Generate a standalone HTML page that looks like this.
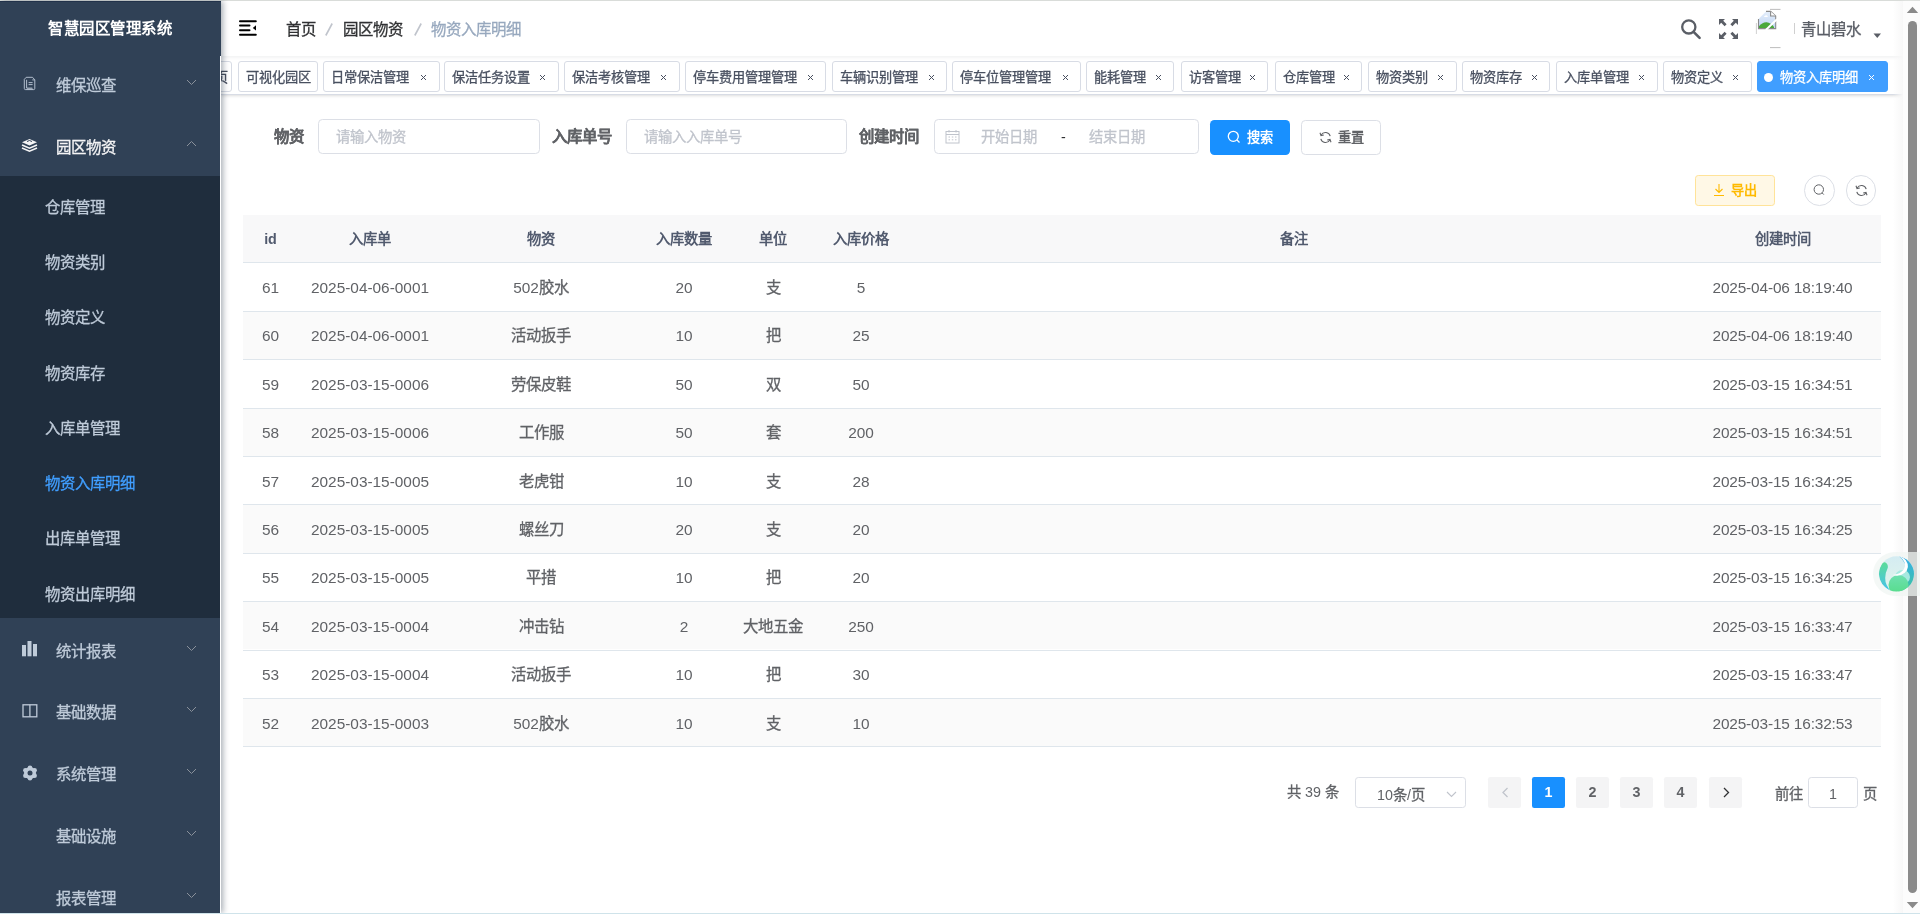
<!DOCTYPE html>
<html lang="zh-CN"><head><meta charset="utf-8"><title>物资入库明细</title>
<style>
*{box-sizing:border-box;margin:0;padding:0}
html,body{width:1920px;height:914px;overflow:hidden;background:#fff;font-family:"Liberation Sans",sans-serif;}
.t{position:absolute;white-space:nowrap;will-change:transform}
.c{-webkit-text-stroke:0.3px currentColor}
.b .c{-webkit-text-stroke:0}
.bs .c{-webkit-text-stroke:0.1px currentColor}
.abs{position:absolute}
</style></head><body>

<div class="abs" style="left:0;top:0;width:1920px;height:1px;background:#dde0dd"></div>
<div class="abs" style="left:0;top:1px;width:221px;height:912px;background:#304156;box-shadow:2px 0 6px rgba(0,21,41,.35);z-index:5"></div>
<div class="abs" style="left:0;top:1px;width:221px;height:1px;background:#22324a;z-index:6"></div>
<div class="abs" style="left:0;top:176px;width:220px;height:442px;background:#1f2d3d;z-index:6"></div>
<div class="abs" style="left:220px;top:56px;width:1px;height:857px;background:#fff;z-index:6"></div>
<div id="side" class="abs" style="left:0;top:0;width:220px;height:914px;z-index:7">
<div class="t b" style="left:0px;top:15.90px;height:25px;line-height:25px;font-size:15.4px;color:#fff;font-weight:bold;width:220px;text-align:center;letter-spacing:0.45px;text-indent:0.45px"><span class="c">智慧园区管理系统</span></div>
<div class="t" style="left:55.5px;top:72.75px;height:25px;line-height:25px;font-size:15.4px;color:#bfcbd9;"><span class="c">维保巡查</span></div>
<div class="t" style="left:55.5px;top:134.85px;height:25px;line-height:25px;font-size:15.4px;color:#f4f4f5;"><span class="c">园区物资</span></div>
<div class="t" style="left:44.5px;top:194.95px;height:25px;line-height:25px;font-size:15.4px;color:#bfcbd9;"><span class="c">仓库管理</span></div>
<div class="t" style="left:44.5px;top:250.20px;height:25px;line-height:25px;font-size:15.4px;color:#bfcbd9;"><span class="c">物资类别</span></div>
<div class="t" style="left:44.5px;top:305.45px;height:25px;line-height:25px;font-size:15.4px;color:#bfcbd9;"><span class="c">物资定义</span></div>
<div class="t" style="left:44.5px;top:360.70px;height:25px;line-height:25px;font-size:15.4px;color:#bfcbd9;"><span class="c">物资库存</span></div>
<div class="t" style="left:44.5px;top:415.95px;height:25px;line-height:25px;font-size:15.4px;color:#bfcbd9;"><span class="c">入库单管理</span></div>
<div class="t" style="left:44.5px;top:471.20px;height:25px;line-height:25px;font-size:15.4px;color:#409eff;"><span class="c">物资入库明细</span></div>
<div class="t" style="left:44.5px;top:526.45px;height:25px;line-height:25px;font-size:15.4px;color:#bfcbd9;"><span class="c">出库单管理</span></div>
<div class="t" style="left:44.5px;top:581.70px;height:25px;line-height:25px;font-size:15.4px;color:#bfcbd9;"><span class="c">物资出库明细</span></div>
<div class="t" style="left:55.5px;top:638.50px;height:25px;line-height:25px;font-size:15.4px;color:#bfcbd9;"><span class="c">统计报表</span></div>
<div class="t" style="left:55.5px;top:700.20px;height:25px;line-height:25px;font-size:15.4px;color:#bfcbd9;"><span class="c">基础数据</span></div>
<div class="t" style="left:55.5px;top:762.00px;height:25px;line-height:25px;font-size:15.4px;color:#bfcbd9;"><span class="c">系统管理</span></div>
<div class="t" style="left:55.5px;top:823.70px;height:25px;line-height:25px;font-size:15.4px;color:#bfcbd9;"><span class="c">基础设施</span></div>
<div class="t" style="left:55.5px;top:886.20px;height:25px;line-height:25px;font-size:15.4px;color:#bfcbd9;"><span class="c">报表管理</span></div>
<svg class="abs" style="left:186px;top:79.10px" width="11" height="7" viewBox="0 0 11 7"><path d="M1 1 L5.5 5.5 L10 1" fill="none" stroke="#8a919b" stroke-width="1.0"/></svg>
<svg class="abs" style="left:186px;top:140.00px" width="11" height="7" viewBox="0 0 11 7"><path d="M1 6 L5.5 1.5 L10 6" fill="none" stroke="#8a919b" stroke-width="1.0"/></svg>
<svg class="abs" style="left:186px;top:644.50px" width="11" height="7" viewBox="0 0 11 7"><path d="M1 1 L5.5 5.5 L10 1" fill="none" stroke="#8a919b" stroke-width="1.0"/></svg>
<svg class="abs" style="left:186px;top:706.20px" width="11" height="7" viewBox="0 0 11 7"><path d="M1 1 L5.5 5.5 L10 1" fill="none" stroke="#8a919b" stroke-width="1.0"/></svg>
<svg class="abs" style="left:186px;top:768.00px" width="11" height="7" viewBox="0 0 11 7"><path d="M1 1 L5.5 5.5 L10 1" fill="none" stroke="#8a919b" stroke-width="1.0"/></svg>
<svg class="abs" style="left:186px;top:829.70px" width="11" height="7" viewBox="0 0 11 7"><path d="M1 1 L5.5 5.5 L10 1" fill="none" stroke="#8a919b" stroke-width="1.0"/></svg>
<svg class="abs" style="left:186px;top:891.70px" width="11" height="7" viewBox="0 0 11 7"><path d="M1 1 L5.5 5.5 L10 1" fill="none" stroke="#8a919b" stroke-width="1.0"/></svg>
<svg class="abs" style="left:18px;top:72px" width="24" height="24" viewBox="0 0 24 24">
<path d="M8.2 5.3 H14.5 L16.8 7.8 V16.4 Q16.8 17.6 15.6 17.6 H7.5 Q6.3 17.6 6.3 16.4 V7.4 Z" fill="none" stroke="#bfcbd9" stroke-width="0.9"/>
<path d="M8.6 7.8 V16" stroke="#bfcbd9" stroke-width="0.9"/>
<path d="M10.6 10.6 H14.6 M10.6 12.6 H14.6" stroke="#bfcbd9" stroke-width="0.9"/>
<path d="M8.6 15.4 H14.2 L15 17.6 H8.6Z" fill="#bfcbd9" opacity="0.7"/>
<path d="M14.3 7.9 H16.6" stroke="#bfcbd9" stroke-width="0.9"/></svg>
<svg class="abs" style="left:21px;top:138px" width="17" height="15" viewBox="0 0 17 15">
<path d="M8.5 1 L16 4.2 L8.5 7.4 L1 4.2Z" fill="#f4f4f5"/>
<path d="M1 7 L8.5 10.2 L16 7" fill="none" stroke="#f4f4f5" stroke-width="1.6"/>
<path d="M1 10 L8.5 13.2 L16 10" fill="none" stroke="#f4f4f5" stroke-width="1.6"/>
<path d="M6 3.5 L8.5 2.5 L11 3.5" fill="none" stroke="#304156" stroke-width="1"/></svg>
<svg class="abs" style="left:22px;top:641px" width="16" height="16" viewBox="0 0 16 16">
<rect x="0" y="4" width="4" height="11.3" fill="#bfcbd9"/><rect x="5.5" y="0" width="4" height="15.3" fill="#bfcbd9"/><rect x="11" y="3" width="4" height="12.3" fill="#bfcbd9"/></svg>
<svg class="abs" style="left:22px;top:704px" width="16" height="14" viewBox="0 0 16 14">
<rect x="1" y="0.8" width="13.8" height="12" fill="none" stroke="#bfcbd9" stroke-width="1.3"/><path d="M7.9 0.8 V12.8" stroke="#bfcbd9" stroke-width="1.3"/></svg>
<svg class="abs" style="left:22px;top:765px" width="16" height="16" viewBox="0 0 16 16">
<defs><mask id="gm"><rect width="16" height="16" fill="#fff"/><circle cx="8" cy="8" r="2.5" fill="#000"/></mask></defs>
<g fill="#bfcbd9" mask="url(#gm)"><circle cx="8" cy="8" r="6"/><circle cx="12.59" cy="10.65" r="2.3"/><circle cx="8.00" cy="13.30" r="2.3"/><circle cx="3.41" cy="10.65" r="2.3"/><circle cx="3.41" cy="5.35" r="2.3"/><circle cx="8.00" cy="2.70" r="2.3"/><circle cx="12.59" cy="5.35" r="2.3"/></g></svg>
</div>
<div class="abs" style="left:221px;top:1px;width:1682px;height:55px;background:#fff;box-shadow:0 1px 4px rgba(0,21,41,.08);z-index:2"></div>
<svg class="abs" style="left:239px;top:20px;z-index:3" width="18" height="16" viewBox="0 0 18 16">
<rect x="0" y="0.2" width="17.8" height="2" rx="1" fill="#000"/>
<rect x="0" y="4.6" width="11.5" height="2" rx="1" fill="#000"/>
<rect x="0" y="9.2" width="11.5" height="2" rx="1" fill="#000"/>
<rect x="0" y="13.8" width="17.8" height="2" rx="1" fill="#000"/>
<path d="M13.8 7.9 L17 5.2 V10.6Z" fill="#000"/></svg>
<div class="abs" style="left:0;top:0;z-index:3">
<div class="t" style="left:285.5px;top:16.70px;height:25px;line-height:25px;font-size:15.4px;color:#303133;"><span class="c">首页</span></div>
<svg class="abs" style="left:324px;top:22px" width="10" height="15" viewBox="0 0 10 15"><path d="M1.8 13.5 L8.2 1.5" stroke="#c0c4cc" stroke-width="1.6"/></svg>
<div class="t" style="left:343px;top:16.70px;height:25px;line-height:25px;font-size:15.4px;color:#303133;"><span class="c">园区物资</span></div>
<svg class="abs" style="left:413px;top:22px" width="10" height="15" viewBox="0 0 10 15"><path d="M1.8 13.5 L8.2 1.5" stroke="#c0c4cc" stroke-width="1.6"/></svg>
<div class="t" style="left:430.5px;top:16.70px;height:25px;line-height:25px;font-size:15.4px;color:#97a8be;"><span class="c">物资入库明细</span></div>
<svg class="abs" style="left:1680px;top:18px" width="22" height="22" viewBox="0 0 22 22">
<circle cx="8.8" cy="8.9" r="6.6" fill="none" stroke="#5a5e66" stroke-width="2.3"/>
<path d="M13.6 13.8 L19.6 19.8" stroke="#5a5e66" stroke-width="2.6" stroke-linecap="round"/></svg>
<svg class="abs" style="left:1719px;top:19px" width="20" height="21" viewBox="0 0 20 21" fill="#5a5e66">
<path d="M0 0 H6 L4.2 1.8 L7.6 5.2 L5.6 7.2 L2.2 3.8 L0 6Z"/>
<path d="M19 0 H13 L14.8 1.8 L11.4 5.2 L13.4 7.2 L16.8 3.8 L19 6Z"/>
<path d="M0 20 H6 L4.2 18.2 L7.6 14.8 L5.6 12.8 L2.2 16.2 L0 14Z"/>
<path d="M19 20 H13 L14.8 18.2 L11.4 14.8 L13.4 12.8 L16.8 16.2 L19 14Z"/></svg>
<svg class="abs" style="left:1754px;top:8px" width="30" height="42" viewBox="0 0 30 42">
<defs><linearGradient id="sky" x1="0" y1="0" x2="0" y2="1"><stop offset="0" stop-color="#e4eefb"/><stop offset="1" stop-color="#bfd4f3"/></linearGradient></defs>
<path d="M16 1.4 H26.5" stroke="#b5b5b5" stroke-width="0.9"/>
<path d="M16 39.6 H26.5" stroke="#b5b5b5" stroke-width="0.9"/>
<path d="M2.4 15 V26" stroke="#c5c5c5" stroke-width="0.8"/>
<path d="M4.5 10.9 L12 3.4 H16.6 L21.7 8 V20.6 H4.5Z" fill="url(#sky)"/>
<path d="M10 8.8 Q11 6.8 13 7.4 Q14.2 8.2 13.6 9 H10Z" fill="#fff"/>
<path d="M4.5 20.6 V18.8 Q8.2 14 12.6 14.2 Q17 14.6 20 19 V20.6Z" fill="#4aa83a"/>
<path d="M4.5 10.9 V20.6 H21.7 V8 L16.6 3.4 H12" fill="none" stroke="#8a8a8a" stroke-width="1.1"/>
<path d="M16.6 3.4 V8 H21.7" fill="#fff" stroke="#8a8a8a" stroke-width="1.1"/>
<path d="M23 11.2 L11.8 22" stroke="#fff" stroke-width="1.9"/></svg>
<div class="abs" style="left:1794px;top:23px;width:1px;height:11px;background:#d0d0d0"></div>
<div class="t" style="left:1800.5px;top:16.70px;height:25px;line-height:25px;font-size:15.4px;color:#5a5e66;"><span class="c">青山碧水</span></div>
<svg class="abs" style="left:1873px;top:33px" width="9" height="6" viewBox="0 0 9 6"><path d="M0.5 0.5 H8 L4.25 5Z" fill="#5a5e66"/></svg>
</div>
<div class="abs" style="left:221px;top:56px;width:1682px;height:38.5px;background:#fff;border-bottom:1px solid #d8dce5;box-shadow:0 1px 3px 0 rgba(0,0,0,.12),0 0 3px 0 rgba(0,0,0,.04);z-index:1"></div>
<div class="abs" style="left:221px;top:56px;width:1682px;height:40px;overflow:hidden;z-index:2">
<div class="abs" style="left:-61px;top:5px;width:72px;height:31px;background:#fff;border:1px solid #d8dce5;color:#495060;border-radius:3px;"></div>
<div class="t" style="left:-6px;top:11.00px;height:21px;line-height:21px;font-size:13.2px;color:#495060;"><span class="c">页</span></div>
<div class="abs" style="left:17px;top:5px;width:80px;height:31px;background:#fff;border:1px solid #d8dce5;color:#495060;border-radius:3px;"></div>
<div class="t" style="left:25px;top:11.00px;height:21px;line-height:21px;font-size:13.2px;color:#495060;"><span class="c">可视化园区</span></div>
<div class="abs" style="left:102px;top:5px;width:117px;height:31px;background:#fff;border:1px solid #d8dce5;color:#495060;border-radius:3px;"></div>
<div class="t" style="left:110px;top:11.00px;height:21px;line-height:21px;font-size:13.2px;color:#495060;"><span class="c">日常保洁管理</span></div>
<svg class="abs" style="left:199.1px;top:17.5px" width="7" height="7" viewBox="0 0 7 7"><path d="M1 1 L6 6 M6 1 L1 6" stroke="#495060" stroke-width="1"/></svg>
<div class="abs" style="left:223px;top:5px;width:115px;height:31px;background:#fff;border:1px solid #d8dce5;color:#495060;border-radius:3px;"></div>
<div class="t" style="left:231px;top:11.00px;height:21px;line-height:21px;font-size:13.2px;color:#495060;"><span class="c">保洁任务设置</span></div>
<svg class="abs" style="left:318.1px;top:17.5px" width="7" height="7" viewBox="0 0 7 7"><path d="M1 1 L6 6 M6 1 L1 6" stroke="#495060" stroke-width="1"/></svg>
<div class="abs" style="left:343px;top:5px;width:116px;height:31px;background:#fff;border:1px solid #d8dce5;color:#495060;border-radius:3px;"></div>
<div class="t" style="left:351px;top:11.00px;height:21px;line-height:21px;font-size:13.2px;color:#495060;"><span class="c">保洁考核管理</span></div>
<svg class="abs" style="left:439.1px;top:17.5px" width="7" height="7" viewBox="0 0 7 7"><path d="M1 1 L6 6 M6 1 L1 6" stroke="#495060" stroke-width="1"/></svg>
<div class="abs" style="left:464px;top:5px;width:141px;height:31px;background:#fff;border:1px solid #d8dce5;color:#495060;border-radius:3px;"></div>
<div class="t" style="left:472px;top:11.00px;height:21px;line-height:21px;font-size:13.2px;color:#495060;"><span class="c">停车费用管理管理</span></div>
<svg class="abs" style="left:586.0px;top:17.5px" width="7" height="7" viewBox="0 0 7 7"><path d="M1 1 L6 6 M6 1 L1 6" stroke="#495060" stroke-width="1"/></svg>
<div class="abs" style="left:611px;top:5px;width:115px;height:31px;background:#fff;border:1px solid #d8dce5;color:#495060;border-radius:3px;"></div>
<div class="t" style="left:619px;top:11.00px;height:21px;line-height:21px;font-size:13.2px;color:#495060;"><span class="c">车辆识别管理</span></div>
<svg class="abs" style="left:706.8px;top:17.5px" width="7" height="7" viewBox="0 0 7 7"><path d="M1 1 L6 6 M6 1 L1 6" stroke="#495060" stroke-width="1"/></svg>
<div class="abs" style="left:731px;top:5px;width:129px;height:31px;background:#fff;border:1px solid #d8dce5;color:#495060;border-radius:3px;"></div>
<div class="t" style="left:739px;top:11.00px;height:21px;line-height:21px;font-size:13.2px;color:#495060;"><span class="c">停车位管理管理</span></div>
<svg class="abs" style="left:840.8px;top:17.5px" width="7" height="7" viewBox="0 0 7 7"><path d="M1 1 L6 6 M6 1 L1 6" stroke="#495060" stroke-width="1"/></svg>
<div class="abs" style="left:865px;top:5px;width:88px;height:31px;background:#fff;border:1px solid #d8dce5;color:#495060;border-radius:3px;"></div>
<div class="t" style="left:873px;top:11.00px;height:21px;line-height:21px;font-size:13.2px;color:#495060;"><span class="c">能耗管理</span></div>
<svg class="abs" style="left:933.8px;top:17.5px" width="7" height="7" viewBox="0 0 7 7"><path d="M1 1 L6 6 M6 1 L1 6" stroke="#495060" stroke-width="1"/></svg>
<div class="abs" style="left:960px;top:5px;width:87px;height:31px;background:#fff;border:1px solid #d8dce5;color:#495060;border-radius:3px;"></div>
<div class="t" style="left:968px;top:11.00px;height:21px;line-height:21px;font-size:13.2px;color:#495060;"><span class="c">访客管理</span></div>
<svg class="abs" style="left:1027.8px;top:17.5px" width="7" height="7" viewBox="0 0 7 7"><path d="M1 1 L6 6 M6 1 L1 6" stroke="#495060" stroke-width="1"/></svg>
<div class="abs" style="left:1054px;top:5px;width:87px;height:31px;background:#fff;border:1px solid #d8dce5;color:#495060;border-radius:3px;"></div>
<div class="t" style="left:1062px;top:11.00px;height:21px;line-height:21px;font-size:13.2px;color:#495060;"><span class="c">仓库管理</span></div>
<svg class="abs" style="left:1121.7px;top:17.5px" width="7" height="7" viewBox="0 0 7 7"><path d="M1 1 L6 6 M6 1 L1 6" stroke="#495060" stroke-width="1"/></svg>
<div class="abs" style="left:1147px;top:5px;width:89px;height:31px;background:#fff;border:1px solid #d8dce5;color:#495060;border-radius:3px;"></div>
<div class="t" style="left:1155px;top:11.00px;height:21px;line-height:21px;font-size:13.2px;color:#495060;"><span class="c">物资类别</span></div>
<svg class="abs" style="left:1216.2px;top:17.5px" width="7" height="7" viewBox="0 0 7 7"><path d="M1 1 L6 6 M6 1 L1 6" stroke="#495060" stroke-width="1"/></svg>
<div class="abs" style="left:1241px;top:5px;width:88px;height:31px;background:#fff;border:1px solid #d8dce5;color:#495060;border-radius:3px;"></div>
<div class="t" style="left:1249px;top:11.00px;height:21px;line-height:21px;font-size:13.2px;color:#495060;"><span class="c">物资库存</span></div>
<svg class="abs" style="left:1309.9px;top:17.5px" width="7" height="7" viewBox="0 0 7 7"><path d="M1 1 L6 6 M6 1 L1 6" stroke="#495060" stroke-width="1"/></svg>
<div class="abs" style="left:1335px;top:5px;width:102px;height:31px;background:#fff;border:1px solid #d8dce5;color:#495060;border-radius:3px;"></div>
<div class="t" style="left:1343px;top:11.00px;height:21px;line-height:21px;font-size:13.2px;color:#495060;"><span class="c">入库单管理</span></div>
<svg class="abs" style="left:1417.0px;top:17.5px" width="7" height="7" viewBox="0 0 7 7"><path d="M1 1 L6 6 M6 1 L1 6" stroke="#495060" stroke-width="1"/></svg>
<div class="abs" style="left:1442px;top:5px;width:89px;height:31px;background:#fff;border:1px solid #d8dce5;color:#495060;border-radius:3px;"></div>
<div class="t" style="left:1450px;top:11.00px;height:21px;line-height:21px;font-size:13.2px;color:#495060;"><span class="c">物资定义</span></div>
<svg class="abs" style="left:1511.0px;top:17.5px" width="7" height="7" viewBox="0 0 7 7"><path d="M1 1 L6 6 M6 1 L1 6" stroke="#495060" stroke-width="1"/></svg>
<div class="abs" style="left:1536px;top:5px;width:131px;height:31px;background:#409eff;border:1px solid #409eff;color:#fff;border-radius:3px;"></div>
<div class="abs" style="left:1543px;top:17px;width:9px;height:9px;border-radius:50%;background:#fff"></div>
<div class="t" style="left:1559px;top:11.00px;height:21px;line-height:21px;font-size:13.2px;color:#fff;"><span class="c">物资入库明细</span></div>
<svg class="abs" style="left:1647.4px;top:17.5px" width="7" height="7" viewBox="0 0 7 7"><path d="M1 1 L6 6 M6 1 L1 6" stroke="#fff" stroke-width="1"/></svg>
</div>
<div class="abs" style="left:0;top:0;z-index:1">
<div class="t b bs" style="left:274.4px;top:123.90px;height:25px;line-height:25px;font-size:15.4px;color:#606266;font-weight:bold;"><span class="c">物资</span></div>
<div class="t b bs" style="left:551.5px;top:123.90px;height:25px;line-height:25px;font-size:15.4px;color:#606266;font-weight:bold;"><span class="c">入库单号</span></div>
<div class="t b bs" style="left:859.2px;top:123.90px;height:25px;line-height:25px;font-size:15.4px;color:#606266;font-weight:bold;"><span class="c">创建时间</span></div>
<div class="abs" style="left:318px;top:119px;width:222px;height:34.6px;border:1px solid #dcdfe6;border-radius:4.4px;background:#fff"></div>
<div class="t" style="left:336px;top:125.80px;height:23px;line-height:23px;font-size:14.3px;color:#c0c4cc;"><span class="c">请输入物资</span></div>
<div class="abs" style="left:626px;top:119px;width:221px;height:34.6px;border:1px solid #dcdfe6;border-radius:4.4px;background:#fff"></div>
<div class="t" style="left:644px;top:125.80px;height:23px;line-height:23px;font-size:14.3px;color:#c0c4cc;"><span class="c">请输入入库单号</span></div>
<div class="abs" style="left:934px;top:119px;width:265px;height:34.6px;border:1px solid #dcdfe6;border-radius:4.4px;background:#fff"></div>
<div class="t" style="left:980.5px;top:125.90px;height:23px;line-height:23px;font-size:14.3px;color:#c0c4cc;"><span class="c">开始日期</span></div>
<div class="t" style="left:1060.5px;top:125.50px;height:23px;line-height:23px;font-size:14.3px;color:#303133;">-</div>
<div class="t" style="left:1088.5px;top:125.90px;height:23px;line-height:23px;font-size:14.3px;color:#c0c4cc;"><span class="c">结束日期</span></div>
<svg class="abs" style="left:945px;top:129px" width="15" height="15" viewBox="0 0 15 15">
<rect x="1" y="2.5" width="13" height="11.5" fill="none" stroke="#c0c4cc" stroke-width="1"/>
<path d="M1 5.5 H14" stroke="#c0c4cc" stroke-width="1"/>
<path d="M4 1 V3.5 M11 1 V3.5" stroke="#c0c4cc" stroke-width="1"/>
<path d="M3.5 8 H5 M6.8 8 H8.3 M10 8 H11.5 M3.5 10.8 H5 M6.8 10.8 H8.3 M10 10.8 H11.5" stroke="#c0c4cc" stroke-width="1"/></svg>
<div class="abs" style="left:1210px;top:120px;width:80px;height:34.6px;background:#1890ff;border-radius:4.4px"></div>
<svg class="abs" style="left:1227px;top:130px" width="14" height="14" viewBox="0 0 14 14">
<circle cx="6.3" cy="6.3" r="5" fill="none" stroke="#fff" stroke-width="1.3"/><path d="M10 10 L12.5 12.5" stroke="#fff" stroke-width="1.3"/></svg>
<div class="t b" style="left:1246.5px;top:126.80px;height:21px;line-height:21px;font-size:13.2px;color:#fff;font-weight:bold;"><span class="c">搜索</span></div>
<div class="abs" style="left:1301px;top:120px;width:80px;height:34.6px;background:#fff;border:1px solid #dcdfe6;border-radius:4.4px"></div>
<svg class="abs" style="left:1319px;top:131px" width="13" height="13" viewBox="0 0 13 13">
<path d="M11.2 5.2 A4.9 4.9 0 0 0 2.2 4" fill="none" stroke="#606266" stroke-width="1.1"/>
<path d="M1.8 7.8 A4.9 4.9 0 0 0 10.8 9" fill="none" stroke="#606266" stroke-width="1.1"/>
<path d="M1 1.8 L2 4.6 L4.8 4" fill="none" stroke="#606266" stroke-width="1.1"/>
<path d="M12 11.2 L11 8.4 L8.2 9" fill="none" stroke="#606266" stroke-width="1.1"/></svg>
<div class="t b" style="left:1338px;top:126.80px;height:21px;line-height:21px;font-size:13.2px;color:#606266;font-weight:bold;"><span class="c">重置</span></div>
<div class="abs" style="left:1695px;top:175px;width:80px;height:30.8px;background:#fff8e6;border:1px solid #ffe399;border-radius:3.3px"></div>
<svg class="abs" style="left:1713px;top:183px" width="12" height="14" viewBox="0 0 12 14">
<path d="M6 1 V9.5 M2.5 6 L6 9.5 L9.5 6 M1 12.5 H11" fill="none" stroke="#ffba00" stroke-width="1.1"/></svg>
<div class="t b" style="left:1731px;top:180.30px;height:21px;line-height:21px;font-size:13.2px;color:#ffba00;font-weight:bold;"><span class="c">导出</span></div>
<div class="abs" style="left:1804.1px;top:175px;width:30.8px;height:30.8px;border:1px solid #dcdfe6;border-radius:50%;background:#fff"></div>
<svg class="abs" style="left:1813.0px;top:184px" width="13" height="13" viewBox="0 0 13 13">
<circle cx="5.8" cy="5.5" r="4.7" fill="none" stroke="#606266" stroke-width="1.0"/><path d="M9.1 8.9 L10.8 10.6" stroke="#606266" stroke-width="1.0"/></svg>
<div class="abs" style="left:1845.6px;top:175px;width:30.8px;height:30.8px;border:1px solid #dcdfe6;border-radius:50%;background:#fff"></div>
<svg class="abs" style="left:1854.5px;top:184px" width="13" height="13" viewBox="0 0 13 13">
<path d="M11.2 5.2 A4.9 4.9 0 0 0 2.2 4" fill="none" stroke="#606266" stroke-width="1.1"/>
<path d="M1.8 7.8 A4.9 4.9 0 0 0 10.8 9" fill="none" stroke="#606266" stroke-width="1.1"/>
<path d="M1 1.8 L2 4.6 L4.8 4" fill="none" stroke="#606266" stroke-width="1.1"/>
<path d="M12 11.2 L11 8.4 L8.2 9" fill="none" stroke="#606266" stroke-width="1.1"/></svg>
<div class="abs" style="left:243px;top:215px;width:1638px;height:47.3px;background:#f8f8f9"></div>
<div class="abs" style="left:243px;top:262.3px;width:1638px;height:1.1px;background:#dfe6ec"></div>
<div class="t b" style="left:243px;top:228.30px;height:23px;line-height:23px;font-size:14.3px;color:#515a6e;font-weight:bold;width:55px;text-align:center;">id</div>
<div class="t b" style="left:298px;top:228.30px;height:23px;line-height:23px;font-size:14.3px;color:#515a6e;font-weight:bold;width:144px;text-align:center;"><span class="c">入库单</span></div>
<div class="t b" style="left:442px;top:228.30px;height:23px;line-height:23px;font-size:14.3px;color:#515a6e;font-weight:bold;width:198px;text-align:center;"><span class="c">物资</span></div>
<div class="t b" style="left:640px;top:228.30px;height:23px;line-height:23px;font-size:14.3px;color:#515a6e;font-weight:bold;width:88px;text-align:center;"><span class="c">入库数量</span></div>
<div class="t b" style="left:728px;top:228.30px;height:23px;line-height:23px;font-size:14.3px;color:#515a6e;font-weight:bold;width:90px;text-align:center;"><span class="c">单位</span></div>
<div class="t b" style="left:818px;top:228.30px;height:23px;line-height:23px;font-size:14.3px;color:#515a6e;font-weight:bold;width:86px;text-align:center;"><span class="c">入库价格</span></div>
<div class="t b" style="left:904px;top:228.30px;height:23px;line-height:23px;font-size:14.3px;color:#515a6e;font-weight:bold;width:780px;text-align:center;"><span class="c">备注</span></div>
<div class="t b" style="left:1684px;top:228.30px;height:23px;line-height:23px;font-size:14.3px;color:#515a6e;font-weight:bold;width:197px;text-align:center;"><span class="c">创建时间</span></div>
<div class="abs" style="left:243px;top:310.70px;width:1638px;height:1.1px;background:#dfe6ec"></div>
<div class="t" style="left:243px;top:275.00px;height:25px;line-height:25px;font-size:15.4px;color:#606266;width:55px;text-align:center;">61</div>
<div class="t" style="left:298px;top:275.00px;height:25px;line-height:25px;font-size:15.4px;color:#606266;width:144px;text-align:center;">2025-04-06-0001</div>
<div class="t" style="left:442px;top:275.00px;height:25px;line-height:25px;font-size:15.4px;color:#606266;width:198px;text-align:center;">502<span class="c">胶水</span></div>
<div class="t" style="left:640px;top:275.00px;height:25px;line-height:25px;font-size:15.4px;color:#606266;width:88px;text-align:center;">20</div>
<div class="t" style="left:728px;top:275.00px;height:25px;line-height:25px;font-size:15.4px;color:#606266;width:90px;text-align:center;"><span class="c">支</span></div>
<div class="t" style="left:818px;top:275.00px;height:25px;line-height:25px;font-size:15.4px;color:#606266;width:86px;text-align:center;">5</div>
<div class="t" style="left:1684px;top:275.00px;height:25px;line-height:25px;font-size:15.4px;color:#606266;width:197px;text-align:center;letter-spacing:-0.15px;">2025-04-06 18:19:40</div>
<div class="abs" style="left:243px;top:311.80px;width:1638px;height:47.3px;background:#fafafa"></div>
<div class="abs" style="left:243px;top:359.10px;width:1638px;height:1.1px;background:#dfe6ec"></div>
<div class="t" style="left:243px;top:323.40px;height:25px;line-height:25px;font-size:15.4px;color:#606266;width:55px;text-align:center;">60</div>
<div class="t" style="left:298px;top:323.40px;height:25px;line-height:25px;font-size:15.4px;color:#606266;width:144px;text-align:center;">2025-04-06-0001</div>
<div class="t" style="left:442px;top:323.40px;height:25px;line-height:25px;font-size:15.4px;color:#606266;width:198px;text-align:center;"><span class="c">活动扳手</span></div>
<div class="t" style="left:640px;top:323.40px;height:25px;line-height:25px;font-size:15.4px;color:#606266;width:88px;text-align:center;">10</div>
<div class="t" style="left:728px;top:323.40px;height:25px;line-height:25px;font-size:15.4px;color:#606266;width:90px;text-align:center;"><span class="c">把</span></div>
<div class="t" style="left:818px;top:323.40px;height:25px;line-height:25px;font-size:15.4px;color:#606266;width:86px;text-align:center;">25</div>
<div class="t" style="left:1684px;top:323.40px;height:25px;line-height:25px;font-size:15.4px;color:#606266;width:197px;text-align:center;letter-spacing:-0.15px;">2025-04-06 18:19:40</div>
<div class="abs" style="left:243px;top:407.50px;width:1638px;height:1.1px;background:#dfe6ec"></div>
<div class="t" style="left:243px;top:371.80px;height:25px;line-height:25px;font-size:15.4px;color:#606266;width:55px;text-align:center;">59</div>
<div class="t" style="left:298px;top:371.80px;height:25px;line-height:25px;font-size:15.4px;color:#606266;width:144px;text-align:center;">2025-03-15-0006</div>
<div class="t" style="left:442px;top:371.80px;height:25px;line-height:25px;font-size:15.4px;color:#606266;width:198px;text-align:center;"><span class="c">劳保皮鞋</span></div>
<div class="t" style="left:640px;top:371.80px;height:25px;line-height:25px;font-size:15.4px;color:#606266;width:88px;text-align:center;">50</div>
<div class="t" style="left:728px;top:371.80px;height:25px;line-height:25px;font-size:15.4px;color:#606266;width:90px;text-align:center;"><span class="c">双</span></div>
<div class="t" style="left:818px;top:371.80px;height:25px;line-height:25px;font-size:15.4px;color:#606266;width:86px;text-align:center;">50</div>
<div class="t" style="left:1684px;top:371.80px;height:25px;line-height:25px;font-size:15.4px;color:#606266;width:197px;text-align:center;letter-spacing:-0.15px;">2025-03-15 16:34:51</div>
<div class="abs" style="left:243px;top:408.60px;width:1638px;height:47.3px;background:#fafafa"></div>
<div class="abs" style="left:243px;top:455.90px;width:1638px;height:1.1px;background:#dfe6ec"></div>
<div class="t" style="left:243px;top:420.20px;height:25px;line-height:25px;font-size:15.4px;color:#606266;width:55px;text-align:center;">58</div>
<div class="t" style="left:298px;top:420.20px;height:25px;line-height:25px;font-size:15.4px;color:#606266;width:144px;text-align:center;">2025-03-15-0006</div>
<div class="t" style="left:442px;top:420.20px;height:25px;line-height:25px;font-size:15.4px;color:#606266;width:198px;text-align:center;"><span class="c">工作服</span></div>
<div class="t" style="left:640px;top:420.20px;height:25px;line-height:25px;font-size:15.4px;color:#606266;width:88px;text-align:center;">50</div>
<div class="t" style="left:728px;top:420.20px;height:25px;line-height:25px;font-size:15.4px;color:#606266;width:90px;text-align:center;"><span class="c">套</span></div>
<div class="t" style="left:818px;top:420.20px;height:25px;line-height:25px;font-size:15.4px;color:#606266;width:86px;text-align:center;">200</div>
<div class="t" style="left:1684px;top:420.20px;height:25px;line-height:25px;font-size:15.4px;color:#606266;width:197px;text-align:center;letter-spacing:-0.15px;">2025-03-15 16:34:51</div>
<div class="abs" style="left:243px;top:504.30px;width:1638px;height:1.1px;background:#dfe6ec"></div>
<div class="t" style="left:243px;top:468.60px;height:25px;line-height:25px;font-size:15.4px;color:#606266;width:55px;text-align:center;">57</div>
<div class="t" style="left:298px;top:468.60px;height:25px;line-height:25px;font-size:15.4px;color:#606266;width:144px;text-align:center;">2025-03-15-0005</div>
<div class="t" style="left:442px;top:468.60px;height:25px;line-height:25px;font-size:15.4px;color:#606266;width:198px;text-align:center;"><span class="c">老虎钳</span></div>
<div class="t" style="left:640px;top:468.60px;height:25px;line-height:25px;font-size:15.4px;color:#606266;width:88px;text-align:center;">10</div>
<div class="t" style="left:728px;top:468.60px;height:25px;line-height:25px;font-size:15.4px;color:#606266;width:90px;text-align:center;"><span class="c">支</span></div>
<div class="t" style="left:818px;top:468.60px;height:25px;line-height:25px;font-size:15.4px;color:#606266;width:86px;text-align:center;">28</div>
<div class="t" style="left:1684px;top:468.60px;height:25px;line-height:25px;font-size:15.4px;color:#606266;width:197px;text-align:center;letter-spacing:-0.15px;">2025-03-15 16:34:25</div>
<div class="abs" style="left:243px;top:505.40px;width:1638px;height:47.3px;background:#fafafa"></div>
<div class="abs" style="left:243px;top:552.70px;width:1638px;height:1.1px;background:#dfe6ec"></div>
<div class="t" style="left:243px;top:517.00px;height:25px;line-height:25px;font-size:15.4px;color:#606266;width:55px;text-align:center;">56</div>
<div class="t" style="left:298px;top:517.00px;height:25px;line-height:25px;font-size:15.4px;color:#606266;width:144px;text-align:center;">2025-03-15-0005</div>
<div class="t" style="left:442px;top:517.00px;height:25px;line-height:25px;font-size:15.4px;color:#606266;width:198px;text-align:center;"><span class="c">螺丝刀</span></div>
<div class="t" style="left:640px;top:517.00px;height:25px;line-height:25px;font-size:15.4px;color:#606266;width:88px;text-align:center;">20</div>
<div class="t" style="left:728px;top:517.00px;height:25px;line-height:25px;font-size:15.4px;color:#606266;width:90px;text-align:center;"><span class="c">支</span></div>
<div class="t" style="left:818px;top:517.00px;height:25px;line-height:25px;font-size:15.4px;color:#606266;width:86px;text-align:center;">20</div>
<div class="t" style="left:1684px;top:517.00px;height:25px;line-height:25px;font-size:15.4px;color:#606266;width:197px;text-align:center;letter-spacing:-0.15px;">2025-03-15 16:34:25</div>
<div class="abs" style="left:243px;top:601.10px;width:1638px;height:1.1px;background:#dfe6ec"></div>
<div class="t" style="left:243px;top:565.40px;height:25px;line-height:25px;font-size:15.4px;color:#606266;width:55px;text-align:center;">55</div>
<div class="t" style="left:298px;top:565.40px;height:25px;line-height:25px;font-size:15.4px;color:#606266;width:144px;text-align:center;">2025-03-15-0005</div>
<div class="t" style="left:442px;top:565.40px;height:25px;line-height:25px;font-size:15.4px;color:#606266;width:198px;text-align:center;"><span class="c">平措</span></div>
<div class="t" style="left:640px;top:565.40px;height:25px;line-height:25px;font-size:15.4px;color:#606266;width:88px;text-align:center;">10</div>
<div class="t" style="left:728px;top:565.40px;height:25px;line-height:25px;font-size:15.4px;color:#606266;width:90px;text-align:center;"><span class="c">把</span></div>
<div class="t" style="left:818px;top:565.40px;height:25px;line-height:25px;font-size:15.4px;color:#606266;width:86px;text-align:center;">20</div>
<div class="t" style="left:1684px;top:565.40px;height:25px;line-height:25px;font-size:15.4px;color:#606266;width:197px;text-align:center;letter-spacing:-0.15px;">2025-03-15 16:34:25</div>
<div class="abs" style="left:243px;top:602.20px;width:1638px;height:47.3px;background:#fafafa"></div>
<div class="abs" style="left:243px;top:649.50px;width:1638px;height:1.1px;background:#dfe6ec"></div>
<div class="t" style="left:243px;top:613.80px;height:25px;line-height:25px;font-size:15.4px;color:#606266;width:55px;text-align:center;">54</div>
<div class="t" style="left:298px;top:613.80px;height:25px;line-height:25px;font-size:15.4px;color:#606266;width:144px;text-align:center;">2025-03-15-0004</div>
<div class="t" style="left:442px;top:613.80px;height:25px;line-height:25px;font-size:15.4px;color:#606266;width:198px;text-align:center;"><span class="c">冲击钻</span></div>
<div class="t" style="left:640px;top:613.80px;height:25px;line-height:25px;font-size:15.4px;color:#606266;width:88px;text-align:center;">2</div>
<div class="t" style="left:728px;top:613.80px;height:25px;line-height:25px;font-size:15.4px;color:#606266;width:90px;text-align:center;"><span class="c">大地五金</span></div>
<div class="t" style="left:818px;top:613.80px;height:25px;line-height:25px;font-size:15.4px;color:#606266;width:86px;text-align:center;">250</div>
<div class="t" style="left:1684px;top:613.80px;height:25px;line-height:25px;font-size:15.4px;color:#606266;width:197px;text-align:center;letter-spacing:-0.15px;">2025-03-15 16:33:47</div>
<div class="abs" style="left:243px;top:697.90px;width:1638px;height:1.1px;background:#dfe6ec"></div>
<div class="t" style="left:243px;top:662.20px;height:25px;line-height:25px;font-size:15.4px;color:#606266;width:55px;text-align:center;">53</div>
<div class="t" style="left:298px;top:662.20px;height:25px;line-height:25px;font-size:15.4px;color:#606266;width:144px;text-align:center;">2025-03-15-0004</div>
<div class="t" style="left:442px;top:662.20px;height:25px;line-height:25px;font-size:15.4px;color:#606266;width:198px;text-align:center;"><span class="c">活动扳手</span></div>
<div class="t" style="left:640px;top:662.20px;height:25px;line-height:25px;font-size:15.4px;color:#606266;width:88px;text-align:center;">10</div>
<div class="t" style="left:728px;top:662.20px;height:25px;line-height:25px;font-size:15.4px;color:#606266;width:90px;text-align:center;"><span class="c">把</span></div>
<div class="t" style="left:818px;top:662.20px;height:25px;line-height:25px;font-size:15.4px;color:#606266;width:86px;text-align:center;">30</div>
<div class="t" style="left:1684px;top:662.20px;height:25px;line-height:25px;font-size:15.4px;color:#606266;width:197px;text-align:center;letter-spacing:-0.15px;">2025-03-15 16:33:47</div>
<div class="abs" style="left:243px;top:699.00px;width:1638px;height:47.3px;background:#fafafa"></div>
<div class="abs" style="left:243px;top:746.30px;width:1638px;height:1.1px;background:#dfe6ec"></div>
<div class="t" style="left:243px;top:710.60px;height:25px;line-height:25px;font-size:15.4px;color:#606266;width:55px;text-align:center;">52</div>
<div class="t" style="left:298px;top:710.60px;height:25px;line-height:25px;font-size:15.4px;color:#606266;width:144px;text-align:center;">2025-03-15-0003</div>
<div class="t" style="left:442px;top:710.60px;height:25px;line-height:25px;font-size:15.4px;color:#606266;width:198px;text-align:center;">502<span class="c">胶水</span></div>
<div class="t" style="left:640px;top:710.60px;height:25px;line-height:25px;font-size:15.4px;color:#606266;width:88px;text-align:center;">10</div>
<div class="t" style="left:728px;top:710.60px;height:25px;line-height:25px;font-size:15.4px;color:#606266;width:90px;text-align:center;"><span class="c">支</span></div>
<div class="t" style="left:818px;top:710.60px;height:25px;line-height:25px;font-size:15.4px;color:#606266;width:86px;text-align:center;">10</div>
<div class="t" style="left:1684px;top:710.60px;height:25px;line-height:25px;font-size:15.4px;color:#606266;width:197px;text-align:center;letter-spacing:-0.15px;">2025-03-15 16:32:53</div>
<div class="t" style="left:1287px;top:781.00px;height:23px;line-height:23px;font-size:14.3px;color:#606266;"><span class="c">共</span> 39 <span class="c">条</span></div>
<div class="abs" style="left:1355px;top:777.2px;width:110.5px;height:30.5px;border:1px solid #dcdfe6;border-radius:3.3px;background:#fff"></div>
<div class="t" style="left:1376.5px;top:783.50px;height:23px;line-height:23px;font-size:14.3px;color:#606266;">10<span class="c">条</span>/<span class="c">页</span></div>
<svg class="abs" style="left:1446px;top:790.7px" width="11" height="7" viewBox="0 0 11 7"><path d="M1 1 L5.5 5.5 L10 1" fill="none" stroke="#c0c4cc" stroke-width="1.1"/></svg>
<div class="abs" style="left:1488px;top:777px;width:33px;height:30.8px;background:#f4f4f5;border-radius:2.2px"></div>
<svg class="abs" style="left:1501.5px;top:787px" width="7" height="11" viewBox="0 0 7 11"><path d="M5.5 1 L1 5.5 L5.5 10" fill="none" stroke="#c0c4cc" stroke-width="1.3"/></svg>
<div class="abs" style="left:1532px;top:777px;width:33px;height:30.8px;background:#1890ff;border-radius:2.2px"></div>
<div class="t b" style="left:1532px;top:780.80px;height:23px;line-height:23px;font-size:14.3px;color:#fff;font-weight:bold;width:33px;text-align:center;">1</div>
<div class="abs" style="left:1576px;top:777px;width:33px;height:30.8px;background:#f4f4f5;border-radius:2.2px"></div>
<div class="t b" style="left:1576px;top:780.80px;height:23px;line-height:23px;font-size:14.3px;color:#606266;font-weight:bold;width:33px;text-align:center;">2</div>
<div class="abs" style="left:1620px;top:777px;width:33px;height:30.8px;background:#f4f4f5;border-radius:2.2px"></div>
<div class="t b" style="left:1620px;top:780.80px;height:23px;line-height:23px;font-size:14.3px;color:#606266;font-weight:bold;width:33px;text-align:center;">3</div>
<div class="abs" style="left:1664px;top:777px;width:33px;height:30.8px;background:#f4f4f5;border-radius:2.2px"></div>
<div class="t b" style="left:1664px;top:780.80px;height:23px;line-height:23px;font-size:14.3px;color:#606266;font-weight:bold;width:33px;text-align:center;">4</div>
<div class="abs" style="left:1709px;top:777px;width:33px;height:30.8px;background:#f4f4f5;border-radius:2.2px"></div>
<svg class="abs" style="left:1722.5px;top:787px" width="7" height="11" viewBox="0 0 7 11"><path d="M1 1 L5.5 5.5 L1 10" fill="none" stroke="#303133" stroke-width="1.3"/></svg>
<div class="t" style="left:1774.5px;top:783.00px;height:23px;line-height:23px;font-size:14.3px;color:#606266;"><span class="c">前往</span></div>
<div class="abs" style="left:1807.5px;top:777px;width:50px;height:30.8px;border:1px solid #dcdfe6;border-radius:3.3px;background:#fff"></div>
<div class="t" style="left:1807.5px;top:782.50px;height:23px;line-height:23px;font-size:14.3px;color:#606266;width:50px;text-align:center;">1</div>
<div class="t" style="left:1862.5px;top:782.80px;height:23px;line-height:23px;font-size:14.3px;color:#606266;"><span class="c">页</span></div>
</div>
<div class="abs" style="left:1893px;top:1px;width:10px;height:912px;background:linear-gradient(to right,rgba(248,248,248,0),#f7f7f7);z-index:8"></div>
<div class="abs" style="left:1903px;top:1px;width:17px;height:912px;background:#fcfcfc;z-index:8"></div>
<div class="abs" style="left:1908px;top:21px;width:9px;height:872px;background:#8a8a8a;border-radius:4.5px;z-index:9"></div>
<svg class="abs" style="left:1906px;top:6px;z-index:9" width="13" height="8" viewBox="0 0 13 8"><path d="M0.8 7 L6.5 0.8 L12.2 7Z" fill="#8a8a8a"/></svg>
<svg class="abs" style="left:1906px;top:901px;z-index:9" width="13" height="8" viewBox="0 0 13 8"><path d="M0.8 1 L6.5 7.2 L12.2 1Z" fill="#8a8a8a"/></svg>
<div class="abs" style="left:0;top:913px;width:1920px;height:1px;background:#cfe3ea;z-index:10"></div>
<div class="abs" style="left:1873px;top:552px;width:47px;height:44px;background:rgba(240,245,242,0.72);border-radius:22px 0 0 22px;z-index:10"></div>
<svg class="abs" style="left:1872px;top:552px;z-index:11" width="48" height="44" viewBox="0 0 48 44">
<defs>
<clipPath id="lc"><circle cx="24.4" cy="21.9" r="17.6"/></clipPath>
<linearGradient id="lbg" x1="0" y1="0" x2="0" y2="1"><stop offset="0" stop-color="#d2ebf3"/><stop offset="1" stop-color="#e4f6ea"/></linearGradient>
<linearGradient id="lr" x1="0" y1="0" x2="0" y2="1"><stop offset="0" stop-color="#36aee8"/><stop offset="1" stop-color="#3dc3a0"/></linearGradient>
<linearGradient id="lg" x1="0" y1="0" x2="0" y2="1"><stop offset="0" stop-color="#6ee0b0"/><stop offset="1" stop-color="#55dc88"/></linearGradient>
<linearGradient id="ll" x1="0" y1="0" x2="0" y2="1"><stop offset="0" stop-color="#5cdc98"/><stop offset="1" stop-color="#45c0f0"/></linearGradient>
</defs>
<g clip-path="url(#lc)">
<rect x="0" y="0" width="48" height="44" fill="url(#lbg)"/>
<path d="M27 4.4 A17.6 17.6 0 0 1 26 39.5 L30 33 Q38 24 33 12 Q30.5 6.5 27 4.4Z" fill="url(#lr)"/>
<ellipse cx="30.5" cy="25" rx="7.5" ry="7" fill="#a6e9e0"/>
<circle cx="26.5" cy="33" r="10" fill="url(#lg)"/>
<path d="M27.2 4.3 Q35.5 10 32 17 Q28.5 22.3 20.5 23 Q27.5 25.3 32.8 20.8 Q38.5 15 33.8 8.2 Q31 5 27.2 4.3Z" fill="#fff"/>
<path d="M9.8 12 Q6.8 17 6.9 22 Q7.2 33 19.5 40 Q13 33 13.2 26 Q13.4 20.5 15.8 15.8 Q16.4 12 13 10.2 Q10.8 10 9.8 12Z" fill="url(#ll)"/>
</g></svg>
</body></html>
